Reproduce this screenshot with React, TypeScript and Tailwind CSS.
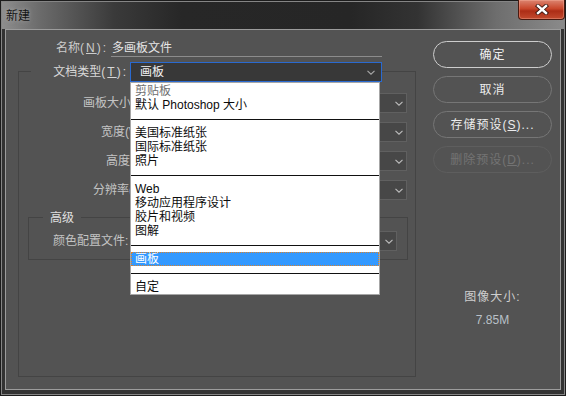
import React from "react";

const Chevron = ({ color = "#bdbdbd" }: { color?: string }) => (
  <svg width="8" height="5" viewBox="0 0 8 5" className="shrink-0">
    <path d="M0.5 0.8 L4 4.2 L7.5 0.8" fill="none" stroke={color} strokeWidth="1.1" />
  </svg>
);

const GroupSelect = ({ cls }: { cls: string }) => (
  <div className={`${cls} h-[20px] shrink-0 bg-[#474747] border border-[#606060] flex items-center justify-end pr-[3px]`}>
    <Chevron />
  </div>
);

type Item = { t: string; kind?: "sep" | "dim" | "sel" };

const items: Item[] = [
  { t: "剪贴板", kind: "dim" },
  { t: "默认 Photoshop 大小" },
  { t: "", kind: "sep" },
  { t: "美国标准纸张" },
  { t: "国际标准纸张" },
  { t: "照片" },
  { t: "", kind: "sep" },
  { t: "Web" },
  { t: "移动应用程序设计" },
  { t: "胶片和视频" },
  { t: "图解" },
  { t: "", kind: "sep" },
  { t: "画板", kind: "sel" },
  { t: "", kind: "sep" },
  { t: "自定" },
];

const rows = [
  { label: "画板大小:", pl: "pl-[64px]" },
  { label: "宽度(W):", pl: "pl-[82px]" },
  { label: "高度(H):", pl: "pl-[87px]" },
  { label: "分辨率(R):", pl: "pl-[74px]" },
];

export default function App() {
  return (
    <div className="w-[566px] h-[396px] overflow-hidden bg-[#1c1c1c] p-px font-['Liberation_Sans','Noto_Sans_CJK_SC',sans-serif] text-[12px] leading-[14px]">
      <div className="w-full h-full border border-[#858585] bg-[#333333] flex flex-col">
        {/* Title bar */}
        <div className="h-[27px] shrink-0 flex items-start justify-between bg-[linear-gradient(90deg,#8e8e8e_0%,#6a6a6a_7%,#3a3a3a_20%,#272727_32%,#262626_62%,#333333_74%,#6e6e6e_88%,#8a8a8a_100%)]">
          <span className="pl-[4px] pt-[7px] text-[12px] leading-[14px] text-[#141414] [text-shadow:0_0_4px_rgba(200,200,200,0.6)]">新建</span>
          <div className="-mt-[2px] -mr-px w-[47px] h-[20px] rounded-b-[4px] border border-t-0 border-[#4a1a10] bg-[linear-gradient(180deg,#dc8470_0%,#c9472c_45%,#ad2d16_58%,#c24a2e_100%)] shadow-[inset_0_0_0_1px_rgba(255,190,170,0.35)] flex items-center justify-center">
            <svg width="14" height="11" viewBox="0 0 14 11">
              <path d="M3 2 L11 9 M11 2 L3 9" stroke="#3a1610" strokeWidth="4.2" strokeLinecap="square" />
              <path d="M3 2 L11 9 M11 2 L3 9" stroke="#ffffff" strokeWidth="2.4" strokeLinecap="square" />
            </svg>
          </div>
        </div>
        {/* Frame + client */}
        <div className="flex-1 px-[3px] pb-[4px]">
          <div className="w-full h-full border border-[#9c9c9c] bg-[#535353] flex text-[#d4d4d4]">
            {/* Left column */}
            <div className="pl-[12px] pt-[11px] flex flex-col">
              {/* Name row */}
              <div className="flex h-[16px] items-start">
                <div className="w-[90px] shrink-0 text-right leading-[15px] text-[#cccccc] whitespace-nowrap">
                  名称<span className="tracking-[2px]">(<span className="underline">N</span>):</span>
                </div>
                <div className="ml-[3px] w-[271px] h-[16px] border-b border-[#8c8c8c] leading-[15px] text-[#e6e6e6] pl-px">
                  多画板文件
                </div>
              </div>
              {/* Group box */}
              <div className="mt-[14px] w-[398px] h-[306px] border border-[#444444] flex flex-col">
                <div className="-mt-[10px] flex h-[20px] items-center">
                  <div className="ml-[12px] w-[99px] h-[20px] shrink-0 bg-[#535353] flex items-center justify-end pr-[2px] text-[#d8d8d8] whitespace-nowrap">
                    文档类型<span className="tracking-[2px]">(<span className="underline">T</span>):</span>
                  </div>
                  <div className="relative z-10 w-[252px] h-[20px] shrink-0 bg-[#383838] border border-[#2a6ad0] flex items-center justify-between pl-[9px] pr-[6px]">
                    <span className="text-[#f2f2f2]">画板</span>
                    <Chevron color="#a8a8a8" />
                    {/* Dropdown menu */}
                    <div className="absolute left-[-1px] top-[19px] w-[250px] bg-white border border-[#a6a6a6] pt-px flex flex-col">
                      {items.map((it, i) =>
                        it.kind === "sep" ? (
                          <div key={i} className="h-[14px] flex items-center">
                            <div className="w-full h-px bg-[#111111]" />
                          </div>
                        ) : it.kind === "sel" ? (
                          <div key={i} className="h-[14px] leading-[14px] bg-[#3399ff] text-white pl-[4px] outline-1 outline-dotted outline-[#d9822e] -outline-offset-1">
                            {it.t}
                          </div>
                        ) : (
                          <div key={i} className={it.kind === "dim" ? "h-[14px] leading-[14px] pl-[4px] text-[#6f6f6f]" : "h-[14px] leading-[14px] pl-[4px] text-[#0c0c0c]"}>
                            {it.t}
                          </div>
                        )
                      )}
                    </div>
                  </div>
                </div>
                <div className="mt-[11px] flex flex-col gap-[9px]">
                  {rows.map((r) => (
                    <div key={r.label} className="flex h-[20px] items-center">
                      <div className={`w-[111px] shrink-0 whitespace-nowrap text-[#c4c4c4] ${r.pl}`}>{r.label}</div>
                      <GroupSelect cls="w-[277px]" />
                    </div>
                  ))}
                </div>
                {/* Advanced */}
                <div className="mt-[17px] ml-[9px] w-[380px] border border-[#444444] flex flex-col pb-[8px]">
                  <div className="-mt-[8px] h-[16px] flex items-center">
                    <span className="ml-[14px] px-[7px] bg-[#535353] text-[#e0e0e0] leading-[16px]">高级</span>
                  </div>
                  <div className="mt-[5px] flex h-[20px] items-center">
                    <div className="w-[101px] shrink-0 whitespace-nowrap pl-[24px] text-[#c4c4c4]">颜色配置文件:</div>
                    <GroupSelect cls="w-[267px]" />
                  </div>
                </div>
              </div>
            </div>
            {/* Right column */}
            <div className="ml-[17px] w-[119px] pt-[11px] flex flex-col">
              <div className="flex flex-col gap-[8px]">
                <div className="h-[27px] rounded-full border border-[#cdcdcd] flex items-center justify-center text-[#f0f0f0] tracking-[1px]">确定</div>
                <div className="h-[27px] rounded-full border border-[#767676] flex items-center justify-center text-[#ececec] tracking-[1px]">取消</div>
                <div className="h-[27px] rounded-full border border-[#767676] flex items-center justify-center text-[#ececec] tracking-[1px]">
                  存储预设(<span className="underline">S</span>)...
                </div>
                <div className="h-[27px] rounded-full border border-[#5e5e5e] flex items-center justify-center text-[#737373] tracking-[1px]">
                  删除预设(<span className="underline">D</span>)...
                </div>
              </div>
              <div className="mt-[117px] text-center text-[#cfcfcf] leading-[14px] tracking-[1px]">图像大小:</div>
              <div className="mt-[9px] text-center text-[#b9c0c8] leading-[14px]">7.85M</div>
            </div>
          </div>
        </div>
      </div>
    </div>
  );
}
